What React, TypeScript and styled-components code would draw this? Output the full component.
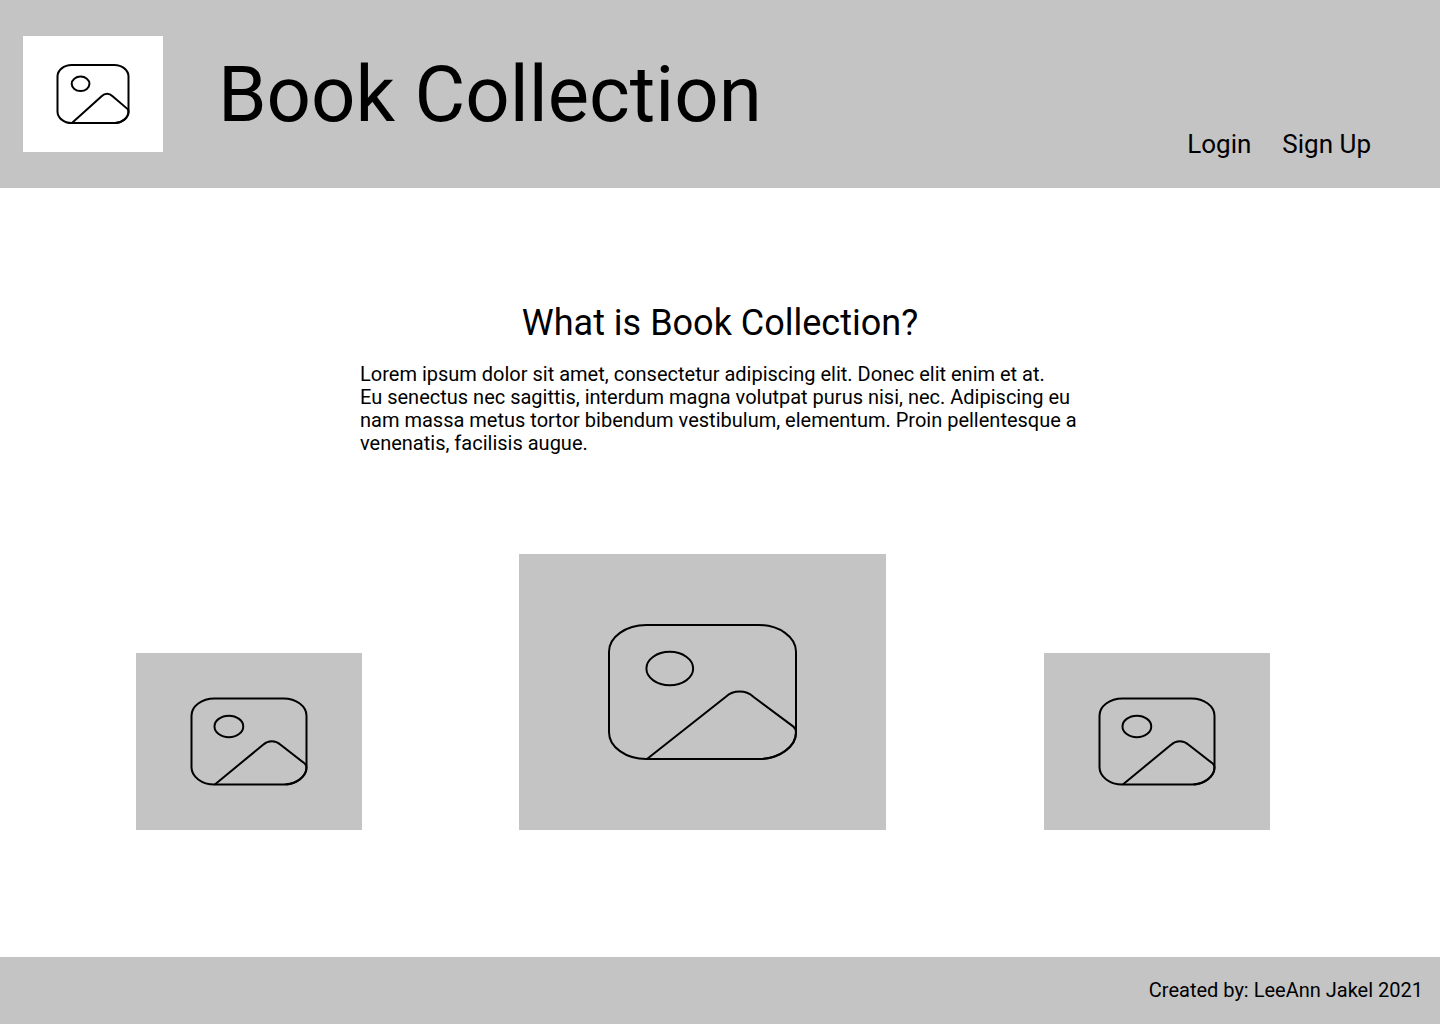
import React from "react";
import styled, { createGlobalStyle } from "styled-components";

const GlobalStyle = createGlobalStyle`
  *, *::before, *::after { box-sizing: border-box; }
  body {
    margin: 0;
    background: #fff;
    color: #000;
    font-family: Roboto, "Liberation Sans", sans-serif;
  }
`;

const Page = styled.div`
  min-height: 100vh;
  display: flex;
  flex-direction: column;
`;

const Header = styled.header`
  display: flex;
  align-items: center;
  gap: 55px;
  padding: 36px 69px 36px 23px;
  background: #c4c4c4;
`;

const Title = styled.h1`
  margin: 0;
  font-size: 78px;
  line-height: 93px;
  font-weight: 400;
`;

const Nav = styled.nav`
  display: flex;
  align-self: flex-end;
  gap: 31px;
  margin-left: auto;
  margin-bottom: -7px;
`;

const NavLink = styled.a`
  color: inherit;
  font-size: 26px;
  line-height: 30px;
  text-decoration: none;
  white-space: nowrap;
`;

const Main = styled.main`
  flex: 1;
  display: flex;
  flex-direction: column;
  padding: 114px 0 127px;
`;

const Intro = styled.section`
  width: 100%;
  max-width: 720px;
  margin: 0 auto;
`;

const Heading = styled.h2`
  margin: 0 0 19px;
  font-size: 36px;
  line-height: 42px;
  font-weight: 400;
  text-align: center;
`;

const Text = styled.p`
  margin: 0;
  font-size: 20px;
  line-height: 23px;
`;

const Gallery = styled.section`
  display: grid;
  grid-template-columns: 383fr 525fr 226px;
  align-items: end;
  margin-top: auto;
  padding: 0 170px 0 136px;
`;

const Drawing = styled.svg<{ $white?: boolean }>`
  display: block;
  flex: none;
  background: ${(p) => (p.$white ? "#fff" : "#c4c4c4")};
  fill: none;
  stroke: #000;
  stroke-width: 2;

  * {
    vector-effect: non-scaling-stroke;
  }
`;

const Footer = styled.footer`
  padding: 22px 17px;
  background: #c4c4c4;
  font-size: 20px;
  line-height: 23px;
  text-align: right;
`;

interface PictureProps {
  width: number;
  height: number;
  iconWidth: number;
  iconHeight: number;
  white?: boolean;
}

/* A picture placeholder: the icon, drawn on a 160-unit square, is centred in the tile. */
function Picture({ width, height, iconWidth, iconHeight, white }: PictureProps) {
  const boxWidth = (160 * width) / iconWidth;
  const boxHeight = (160 * height) / iconHeight;
  return (
    <Drawing
      $white={white}
      width={width}
      height={height}
      viewBox={`${(160 - boxWidth) / 2} ${(160 - boxHeight) / 2} ${boxWidth} ${boxHeight}`}
      preserveAspectRatio="none"
      aria-hidden="true"
    >
      <rect width="160" height="160" rx="32" />
      <circle cx="52" cy="52" r="20" />
      <path d="M32.5 160L100 85.6C106.5 77.5 117 77.5 123.5 85.6L157.5 121C159.5 123.5 160 125.5 160 129C160 144 147 158.5 131 160" />
    </Drawing>
  );
}

export default function App() {
  return (
    <Page>
      <GlobalStyle />
      <Header>
        <Picture width={140} height={116} iconWidth={71} iconHeight={58} white />
        <Title>Book Collection</Title>
        <Nav>
          <NavLink href="#login">Login</NavLink>
          <NavLink href="#signup">Sign Up</NavLink>
        </Nav>
      </Header>
      <Main>
        <Intro>
          <Heading>What is Book Collection?</Heading>
          <Text>
            Lorem ipsum dolor sit amet, consectetur adipiscing elit. Donec elit enim et at.
            <br />
            Eu senectus nec sagittis, interdum magna volutpat purus nisi, nec. Adipiscing eu
            nam massa metus tortor bibendum vestibulum, elementum. Proin pellentesque a
            venenatis, facilisis augue.
          </Text>
        </Intro>
        <Gallery>
          <Picture width={226} height={177} iconWidth={115} iconHeight={86} />
          <Picture width={367} height={276} iconWidth={187} iconHeight={134} />
          <Picture width={226} height={177} iconWidth={115} iconHeight={86} />
        </Gallery>
      </Main>
      <Footer>Created by: LeeAnn Jakel 2021</Footer>
    </Page>
  );
}
